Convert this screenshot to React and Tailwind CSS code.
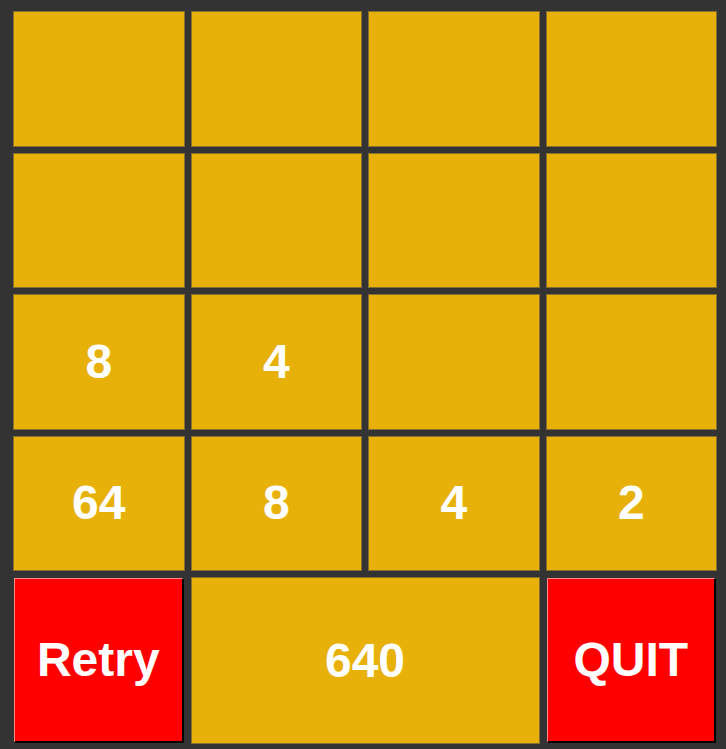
const board = [
  ["", "", "", ""],
  ["", "", "", ""],
  ["8", "4", "", ""],
  ["64", "8", "4", "2"],
];

function Tile({ value }) {
  return (
    <div className="h-[135.5px] flex items-center justify-center bg-[#e7b10a] border border-[#85702f] text-white font-bold text-[48px] leading-none">
      {value}
    </div>
  );
}

export default function App() {
  const score = 640;

  return (
    <div
      className="w-[726px] h-[749px] bg-[#333333] pl-[13px] pr-[9px] pt-[11px]"
      style={{ fontFamily: '"Liberation Sans", Arial, sans-serif' }}
    >
      <div className="grid grid-cols-4 gap-[6px]">
        {board.flat().map((v, i) => (
          <Tile key={i} value={v} />
        ))}

        {/* bottom controls */}
        <div className="h-[167px] p-px">
          <button className="w-full h-full flex items-center justify-center bg-[#ff0000] text-white font-bold text-[48px] leading-none border-t border-l border-[#ff8a8a] border-r-2 border-b-2 border-r-black border-b-black">
            Retry
          </button>
        </div>
        <div className="col-span-2 h-[167px] flex items-center justify-center bg-[#e7b10a] border border-[#85702f] text-white font-bold text-[48px] leading-none">
          {score}
        </div>
        <div className="h-[167px] p-px">
          <button className="w-full h-full flex items-center justify-center bg-[#ff0000] text-white font-bold text-[48px] leading-none border-t border-l border-[#ff8a8a] border-r-2 border-b-2 border-r-black border-b-black">
            QUIT
          </button>
        </div>
      </div>
    </div>
  );
}
